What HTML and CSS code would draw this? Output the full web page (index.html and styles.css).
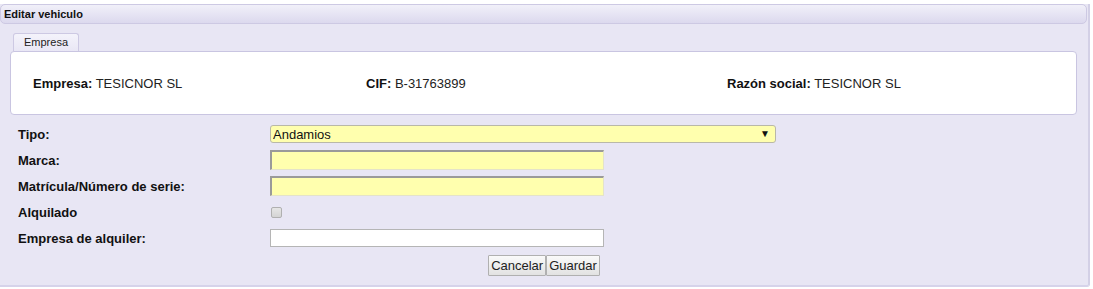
FILE: index.html
```html
<!DOCTYPE html>
<html lang="es">
<head>
    <meta charset="UTF-8">
    <title>Editar vehiculo</title>
    <link rel="stylesheet" href="styles.css">
</head>
<body>
    <div class="panel">
        <div class="panel-header">Editar vehiculo</div>

        <div class="tabs">
            <ul class="tab-list">
                <li class="tab active">Empresa</li>
            </ul>
            <div class="tab-body">
                <div class="info"><strong>Empresa:</strong> TESICNOR SL</div>
                <div class="info"><strong>CIF:</strong> B-31763899</div>
                <div class="info"><strong>Razón social:</strong> TESICNOR SL</div>
            </div>
        </div>

        <form class="form">
            <label class="label" for="tipo">Tipo:</label>
            <div class="field">
                <div class="select-wrap">
                    <select id="tipo" class="select">
                        <option>Andamios</option>
                    </select>
                </div>
            </div>

            <label class="label" for="marca">Marca:</label>
            <div class="field"><input id="marca" type="text" class="input required"></div>

            <label class="label" for="matricula">Matrícula/Número de serie:</label>
            <div class="field"><input id="matricula" type="text" class="input required"></div>

            <label class="label" for="alquilado">Alquilado</label>
            <div class="field"><input id="alquilado" type="checkbox" class="check" disabled></div>

            <label class="label" for="empresa-alquiler">Empresa de alquiler:</label>
            <div class="field"><input id="empresa-alquiler" type="text" class="input plain"></div>
        </form>

        <div class="buttons">
            <button type="button" class="btn">Cancelar</button><button type="button" class="btn">Guardar</button>
        </div>
    </div>
</body>
</html>
```
FILE: styles.css
```css
body {
    margin: 0;
    background: #fff;
    font-family: "Liberation Sans", Arial, sans-serif;
    color: #111;
}

.panel {
    width: 1088px;
    height: 281px;
    margin-top: 4px;
    background: #e8e6f4;
    border-right: 2px solid #d3d0e6;
    border-bottom: 2px solid #d6d3ea;
    border-bottom-right-radius: 3px;
}

.panel-header {
    height: 18px;
    margin: 2px 1px 0 0;
    padding-left: 3px;
    line-height: 18px;
    font-size: 11px;
    font-weight: bold;
    color: #111;
    background: linear-gradient(#f1f0f9, #dcd9ee);
    border: 1px solid #cdc9e3;
    border-radius: 5px;
}

.tabs {
    margin: 9px 0 0 10px;
    width: 1067px;
}

.tab-list {
    list-style: none;
    margin: 0;
    padding: 0 0 0 3px;
    display: flex;
}

.tab {
    width: 64px;
    height: 17px;
    line-height: 17px;
    text-align: center;
    font-size: 11px;
    color: #222;
    background: linear-gradient(#f4f3fb, #e9e7f5);
    border: 1px solid #cdc9e3;
    border-bottom: none;
    border-radius: 3px 3px 0 0;
}

.tab-body {
    height: 62px;
    display: grid;
    grid-template-columns: 333px 361px 1fr;
    align-items: center;
    padding-left: 22px;
    background: #fff;
    border: 1px solid #c9c5e1;
    border-radius: 4px;
    font-size: 13px;
    color: #222;
}

.info strong {
    color: #111;
}

.form {
    display: grid;
    grid-template-columns: 252px 1fr;
    grid-auto-rows: 26px;
    align-items: center;
    margin: 6px 0 0 18px;
}

.label {
    font-size: 13px;
    font-weight: bold;
    color: #111;
}

.field {
    display: flex;
    align-items: center;
}

.select-wrap {
    position: relative;
    width: 506px;
}

.select-wrap::after {
    content: "\25BC";
    position: absolute;
    right: 6px;
    top: 3px;
    font-size: 10px;
    color: #111;
    pointer-events: none;
}

.select {
    appearance: none;
    -webkit-appearance: none;
    width: 506px;
    height: 18px;
    margin: 0;
    padding: 0 0 0 2px;
    font-family: "Liberation Sans", Arial, sans-serif;
    font-size: 13px;
    color: #111;
    background: #ffffae;
    border: 1px solid #b9b8a8;
    border-radius: 3px;
}

.input {
    box-sizing: border-box;
    width: 334px;
    margin: 0;
    padding: 0 2px;
    font-family: "Liberation Sans", Arial, sans-serif;
    font-size: 13px;
}

.input.required {
    height: 20px;
    background: #ffffae;
    border: 1px solid #e4e3c9;
    border-top: 2px solid #9a9a9a;
    border-left: 2px solid #9a9a9a;
}

.input.plain {
    height: 18px;
    background: #fff;
    border: 1px solid #b5b5b5;
}

.check {
    appearance: none;
    -webkit-appearance: none;
    width: 11px;
    height: 11px;
    margin: 0 0 0 1px;
    background: linear-gradient(#e6e6e6, #d4d4d4);
    border: 1px solid #b0b0b0;
    border-radius: 2px;
}

.buttons {
    margin-top: 4px;
    text-align: center;
    font-size: 0;
}

.btn {
    height: 21px;
    margin: 0;
    padding: 0 2px;
    font-family: "Liberation Sans", Arial, sans-serif;
    font-size: 13px;
    color: #222;
    background: linear-gradient(#fafafa, #e2e2e2);
    border: 1px solid #b0b0b0;
    border-radius: 1px;
}
```
